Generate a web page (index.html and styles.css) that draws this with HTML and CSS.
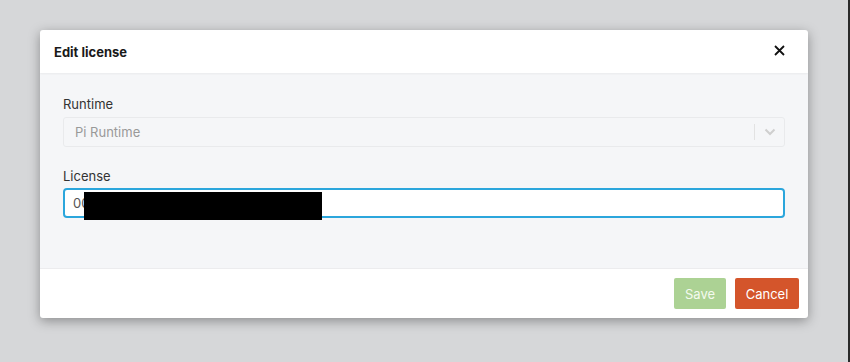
FILE: index.html
```html
<!DOCTYPE html>
<html lang="en">
<head>
	<meta charset="UTF-8">
	<title>Edit license</title>
	<link rel="stylesheet" href="styles.css">
</head>
<body>
	<div class="backdrop">
		<div class="modal">
			<!-- header -->
			<div class="modal-header">
				<span class="modal-title">Edit license</span>
				<a href="#" class="close-btn" title="Close">
					<svg width="11" height="11" viewBox="0 0 11 11"><path d="M1 1L10 10M10 1L1 10" stroke="#111" stroke-width="1.8" fill="none"/></svg>
				</a>
			</div>
			<!-- body -->
			<div class="modal-body">
				<div class="field">
					<label class="field-label">Runtime</label>
					<div class="select disabled">
						<span class="select-value">Pi Runtime</span>
						<span class="select-sep"></span>
						<span class="select-arrow">
							<svg width="12" height="8" viewBox="0 0 12 8"><path d="M1.5 1.5L6 6L10.5 1.5" stroke="#cfcfcf" stroke-width="2" fill="none"/></svg>
						</span>
					</div>
				</div>
				<div class="field">
					<label class="field-label">License</label>
					<div class="text-input focused">
						<span>00</span>
						<span class="redacted"></span>
					</div>
				</div>
			</div>
			<!-- footer -->
			<div class="modal-footer">
				<button class="btn btn-save" disabled>Save</button>
				<button class="btn btn-cancel">Cancel</button>
			</div>
		</div>
	</div>
</body>
</html>
```

FILE: styles.css
```css
/*reset*/
html, body{
	margin: 0;
	padding: 0;
}
body{
	width: 850px;
	height: 362px;
	overflow: hidden;
	background: #d6d7d9;
	box-shadow: inset -2px 0 0 #2a2a2a;
	font: 13px/16px Inter, "Liberation Sans", sans-serif;
	color: #333;
}
a{
	text-decoration: none;
}
/*main*/
.backdrop{
	padding: 30px 0 0 40px;
}
.modal{
	width: 768px;
	background: #fff;
	border-radius: 3px;
	box-shadow: 0 3px 12px rgba(0,0,0,0.35);
	overflow: hidden;
}
/*header*/
.modal-header{
	display: flex;
	align-items: center;
	justify-content: space-between;
	height: 43px;
	padding: 0 23px 0 14px;
	position: relative;
	z-index: 1;
	box-shadow: 0 1px 2px rgba(0,0,0,0.05);
}
.modal-title{
	font-weight: 700;
	color: #1a1a1a;
}
.close-btn{
	display: flex;
	margin-top: -2px;
}
/*body*/
.modal-body{
	background: #f5f6f8;
	padding: 23px 23px 50px;
	border-bottom: 1px solid #ececee;
}
.field + .field{
	margin-top: 21px;
}
.field-label{
	display: block;
	margin-bottom: 5px;
	color: #333;
}
.field:nth-child(2) .field-label{
	margin-bottom: 4px;
}
.select{
	display: flex;
	align-items: center;
	height: 28px;
	border: 1px solid #e9eaec;
	border-radius: 3px;
	background: #f5f6f8;
}
.select-value{
	flex: 1;
	padding-left: 11px;
	color: #999;
}
.select-sep{
	width: 1px;
	height: 16px;
	background: #e2e2e2;
}
.select-arrow{
	display: flex;
	justify-content: center;
	width: 29px;
}
.text-input{
	position: relative;
	height: 26px;
	line-height: 26px;
	padding: 0 8px;
	border: 2px solid #2ba6dc;
	border-radius: 4px;
	background: #fff;
	color: #555;
}
.redacted{
	position: absolute;
	left: 19px;
	top: 2px;
	width: 238px;
	height: 28px;
	background: #000;
}
/*footer*/
.modal-footer{
	display: flex;
	justify-content: flex-end;
	gap: 9px;
	padding: 9px 9px 9px;
	height: 31px;
}
.btn{
	height: 31px;
	border: none;
	border-radius: 2px;
	font: 13px Inter, "Liberation Sans", sans-serif;
	color: #fff;
	cursor: pointer;
}
.btn-save{
	width: 52px;
	background: #acd294;
	color: #f4faef;
}
.btn-cancel{
	width: 64px;
	background: #d4552b;
}
```
